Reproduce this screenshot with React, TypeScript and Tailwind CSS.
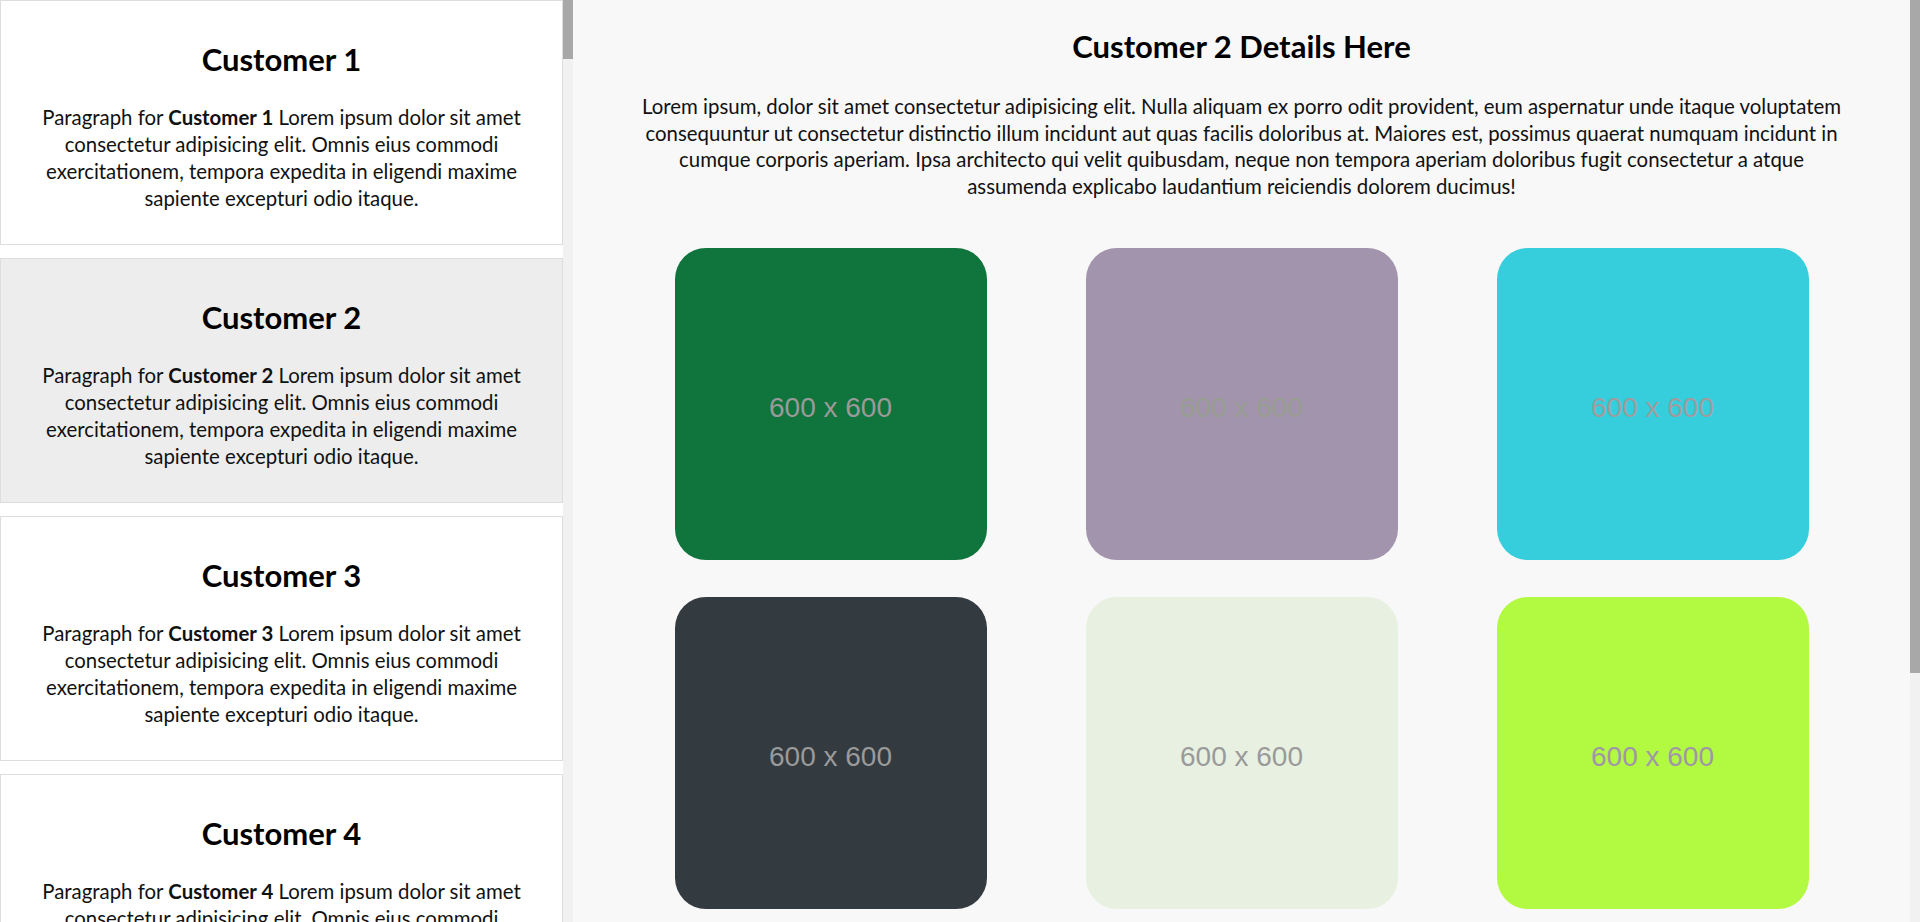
import React from "react";

const customers = [1, 2, 3, 4, 5];

const tiles = [
  { bg: "bg-[#10743d]", fg: "text-[#9a9a9a]" },
  { bg: "bg-[#a394ae]", fg: "text-[#979d90]" },
  { bg: "bg-[#36cedc]", fg: "text-[#a09c9e]" },
  { bg: "bg-[#333a40]", fg: "text-[#9a9a9a]" },
  { bg: "bg-[#e8f1e1]", fg: "text-[#9a9a9a]" },
  { bg: "bg-[#b2f942]", fg: "text-[#a096a8]" },
];

function ScrollTrack({ thumb }: { thumb: string }) {
  return (
    <div className="h-full w-[10px] shrink-0 bg-[#f1f1f1]">
      <div className={`w-full bg-[#a8a8a8] ${thumb}`} />
    </div>
  );
}

function CustomerCard({ n, active }: { n: number; active: boolean }) {
  return (
    <div
      className={`mb-[13px] border border-[#dddddd] px-[12px] pt-[13px] pb-[12px] text-center ${
        active ? "bg-[#ededed]" : "bg-white"
      }`}
    >
      <h2 className="my-[25px] text-[31px] font-bold leading-[40px] text-black">Customer {n}</h2>
      <p className="mb-[20px] text-[20.4px] leading-[27px] text-[#111]">
        Paragraph for <b>Customer {n}</b> Lorem ipsum dolor sit amet consectetur adipisicing elit. Omnis
        eius commodi exercitationem, tempora expedita in eligendi maxime sapiente excepturi odio itaque.
      </p>
    </div>
  );
}

export default function App() {
  return (
    <div className="flex h-screen w-full overflow-hidden font-['Lato','Noto_Sans',sans-serif]">
      <aside className="flex h-full w-[573px] shrink-0 bg-white">
        <div className="h-full flex-1 overflow-hidden">
          {customers.map((n) => (
            <CustomerCard key={n} n={n} active={n === 2} />
          ))}
        </div>
        <ScrollTrack thumb="h-[59px]" />
      </aside>
      <main className="flex h-full flex-1 bg-[#f8f8f8]">
        <div className="h-full flex-1 overflow-hidden px-[52px] pt-[26px]">
          <h1 className="text-center text-[31px] font-bold leading-[40px] text-black">Customer 2 Details Here</h1>
          <p className="mx-[14px] mt-[27px] text-center text-[20.4px] leading-[26.6px] text-[#111]">
            Lorem ipsum, dolor sit amet consectetur adipisicing elit. Nulla aliquam ex porro odit provident, eum
            aspernatur unde itaque voluptatem consequuntur ut consectetur distinctio illum incidunt aut quas facilis
            doloribus at. Maiores est, possimus quaerat numquam incidunt in cumque corporis aperiam. Ipsa architecto
            qui velit quibusdam, neque non tempora aperiam doloribus fugit consectetur a atque assumenda explicabo
            laudantium reiciendis dolorem ducimus!
          </p>
          <div className="mt-[49px] grid grid-cols-3 justify-items-center gap-y-[37px]">
            {tiles.map((t, i) => (
              <div
                key={i}
                className={`flex h-[312px] w-[312px] items-center justify-center rounded-[31px] pt-[8px] ${t.bg}`}
              >
                <span className={`font-['Liberation_Sans',Arial,sans-serif] text-[28px] ${t.fg}`}>600 x 600</span>
              </div>
            ))}
          </div>
        </div>
        <ScrollTrack thumb="h-[673px]" />
      </main>
    </div>
  );
}
